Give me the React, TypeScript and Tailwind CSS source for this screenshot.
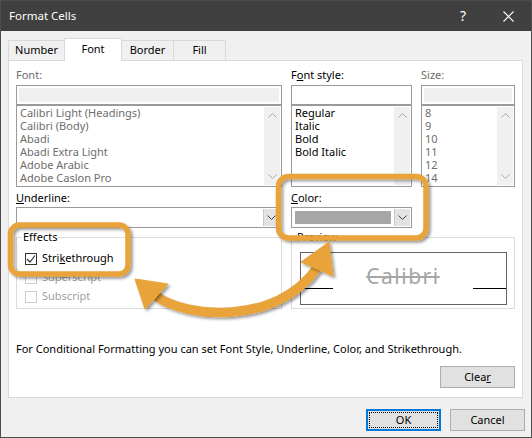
import React from 'react';

const Chev = ({ up, color = '#a9a9a9' }: { up?: boolean; color?: string }) => (
  <svg width="9" height="5" viewBox="0 0 9 5" className="block">
    <path
      d={up ? 'M0.5 4.5 L4.5 0.5 L8.5 4.5' : 'M0.5 0.5 L4.5 4.5 L8.5 0.5'}
      fill="none"
      stroke={color}
      strokeWidth="1"
    />
  </svg>
);

const ScrollBar = () => (
  <div className="w-[16px] my-px mr-px bg-[#f0f0f0] flex flex-col items-center justify-between py-[6px]">
    <Chev up />
    <Chev />
  </div>
);

const ListBox = ({ items, dark }: { items: string[]; dark?: boolean }) => (
  <div className="h-[82px] border border-[#9a9a9a] flex overflow-hidden bg-white">
    <div className={`flex-1 pl-[3px] leading-[13px] ${dark ? 'text-black' : 'text-[#6d6d6d]'}`}>
      {items.map((it) => (
        <div key={it} className="whitespace-nowrap">
          {it}
        </div>
      ))}
    </div>
    <ScrollBar />
  </div>
);

const TextBox = ({ filled }: { filled?: boolean }) => (
  <div className="h-[20px] border border-[#9a9a9a] bg-white p-[2px]">
    {filled && <div className="h-full bg-[#efefef]" />}
  </div>
);

const DropButton = () => (
  <div className="w-[16px] h-full bg-[#e3e3e3] border-l border-[#c8c8c8] flex items-center justify-center">
    <Chev color="#404040" />
  </div>
);

const CheckRow = ({ label, checked, disabled }: { label: React.ReactNode; checked?: boolean; disabled?: boolean }) => (
  <div className="h-[19px] flex items-center pl-[8px] gap-[5px]">
    <div
      className={`w-[12px] h-[12px] border bg-white flex items-center justify-center ${
        disabled ? 'border-[#cccccc]' : 'border-[#333333]'
      }`}
    >
      {checked && (
        <svg width="10" height="10" viewBox="0 0 10 10">
          <path d="M1 5 L4 8 L9 1.5" fill="none" stroke="#333" strokeWidth="1.2" />
        </svg>
      )}
    </div>
    <span className={disabled ? 'text-[#a0a0a0]' : 'text-black'}>{label}</span>
  </div>
);

export default function App() {
  return (
    <div className="relative w-[532px] h-[438px] bg-[#f0f0f0] border border-[#4d4d4d] overflow-hidden font-['Noto_Sans','Liberation_Sans',sans-serif] text-[11px] text-black">
      {/* title bar */}
      <div className="h-[30px] bg-[#404040] flex items-center pl-[8px] text-white">
        <span className="flex-1 text-[11.5px]">Format Cells</span>
        <span className="w-[44px] text-center text-[14px] leading-none">?</span>
        <div className="w-[46px] flex justify-center">
          <svg width="11" height="11" viewBox="0 0 11 11">
            <path d="M0.5 0.5 L10.5 10.5 M10.5 0.5 L0.5 10.5" stroke="#fff" strokeWidth="1.1" />
          </svg>
        </div>
      </div>

      {/* tabs */}
      <div className="h-[29px] flex items-end pl-[7px]">
        <div className="w-[57px] h-[20px] border border-b-0 border-[#d9d9d9] bg-[#f0f0f0] flex items-center justify-center">
          Number
        </div>
        <div className="relative z-10 -ml-px -mb-px w-[58px] h-[23px] border border-b-0 border-[#d9d9d9] bg-white flex items-center justify-center pb-[2px]">
          Font
        </div>
        <div className="-ml-px w-[53px] h-[20px] border border-b-0 border-[#d9d9d9] bg-[#f0f0f0] flex items-center justify-center">
          Border
        </div>
        <div className="-ml-px w-[53px] h-[20px] border border-b-0 border-[#d9d9d9] bg-[#f0f0f0] flex items-center justify-center">
          Fill
        </div>
      </div>

      {/* panel */}
      <div className="ml-[7px] w-[515px] h-[338px] bg-white border border-[#d9d9d9] pl-[7px] pt-[7px]">
        <div className="grid grid-cols-[266px_121px_94px] gap-x-[9px]">
          <div className="h-[17px] leading-[14px] text-[#6d6d6d]">Font:</div>
          <div className="h-[17px] leading-[14px]">
            F<span className="underline">o</span>nt style:
          </div>
          <div className="h-[17px] leading-[14px] text-[#6d6d6d]">Size:</div>

          <TextBox filled />
          <TextBox />
          <TextBox filled />

          <ListBox
            items={[
              'Calibri Light (Headings)',
              'Calibri (Body)',
              'Abadi',
              'Abadi Extra Light',
              'Adobe Arabic',
              'Adobe Caslon Pro',
            ]}
          />
          <ListBox dark items={['Regular', 'Italic', 'Bold', 'Bold Italic']} />
          <ListBox items={['8', '9', '10', '11', '12', '14']} />
        </div>

        <div className="grid grid-cols-[266px_121px_94px] gap-x-[9px]">
          <div className="h-[20px] pt-[4px] leading-[14px]">
            <span className="underline">U</span>nderline:
          </div>
          <div className="h-[20px] pt-[4px] leading-[14px]">
            <span className="underline">C</span>olor:
          </div>
          <div />

          <div className="w-[265px] h-[21px] border border-[#9a9a9a] bg-white flex justify-end p-px">
            <DropButton />
          </div>
          <div className="h-[21px] border border-[#9a9a9a] bg-white flex p-px">
            <div className="flex-1 p-[2px] pr-[3px]">
              <div className="h-full bg-[#a6a6a6]" />
            </div>
            <DropButton />
          </div>
          <div />
        </div>

        <div className="mt-[2px] grid grid-cols-[266px_121px_94px] gap-x-[9px]">
          <fieldset className="border border-[#dcdcdc] pb-[2px]">
            <legend className="ml-[5px] px-px leading-[14px]">Effects</legend>
            <div className="mt-[5px]">
              <CheckRow
                checked
                label={
                  <>
                    Stri<span className="underline">k</span>ethrough
                  </>
                }
              />
              <CheckRow disabled label="Superscript" />
              <CheckRow disabled label="Subscript" />
            </div>
          </fieldset>

          <fieldset className="col-span-2 border border-[#dcdcdc]">
            <legend className="ml-[4px] px-px leading-[14px]">Preview</legend>
            <div className="mt-[8px] ml-[8px] mr-[7px] h-[53px] border border-[#646464] flex items-start justify-between pl-[2px]">
              <div className="mt-[35px] w-[30px] h-px bg-black" />
              <span className="mt-[9px] text-[21px] leading-[28px] tracking-[1.5px] text-[#a6a6a6] line-through decoration-[#a6a6a6]">
                Calibri
              </span>
              <div className="mt-[35px] w-[33px] h-px bg-black" />
            </div>
          </fieldset>
        </div>

        <div className="mt-[33px] leading-[14px]">
          For Conditional Formatting you can set Font Style, Underline, Color, and Strikethrough.
        </div>

        <div className="mt-[10px] w-[499px] flex justify-end">
          <div className="w-[75px] h-[22px] border border-[#adadad] bg-[#e1e1e1] flex items-center justify-center">
            Clea<span className="underline">r</span>
          </div>
        </div>
      </div>

      {/* dialog buttons */}
      <div className="mt-[11px] flex justify-end gap-[9px] pr-[6px]">
        <div className="w-[75px] h-[22px] border-2 border-[#0078d7] bg-[#e1e1e1] p-px">
          <div className="h-full border border-dotted border-black flex items-center justify-center">OK</div>
        </div>
        <div className="w-[75px] h-[22px] border border-[#adadad] bg-[#e1e1e1] flex items-center justify-center">
          Cancel
        </div>
      </div>

      {/* orange annotation overlay */}
      <svg
        className="absolute -left-px -top-px pointer-events-none"
        width="532"
        height="438"
        viewBox="0 0 532 438"
      >
        <defs>
          <filter id="sh" x="-20%" y="-20%" width="140%" height="140%">
            <feDropShadow dx="2" dy="2" stdDeviation="1.6" floodColor="#000" floodOpacity="0.4" />
          </filter>
        </defs>
        <g filter="url(#sh)" fill="none" stroke="#e8a33a">
          <rect x="10.5" y="225" width="117.5" height="49" rx="9" strokeWidth="5.5" />
          <rect x="278.5" y="176.5" width="147.5" height="61.5" rx="10" strokeWidth="5.5" />
          <path d="M156 296 C186 318 276 326 317 268" strokeWidth="9.5" />
        </g>
        <g filter="url(#sh)" fill="#e8a33a" stroke="#e8a33a" strokeLinejoin="round" strokeWidth="1">
          <polygon points="135,279 145,309 168,284" />
          <polygon points="329,242 301,262 333,276" />
        </g>
      </svg>
    </div>
  );
}
